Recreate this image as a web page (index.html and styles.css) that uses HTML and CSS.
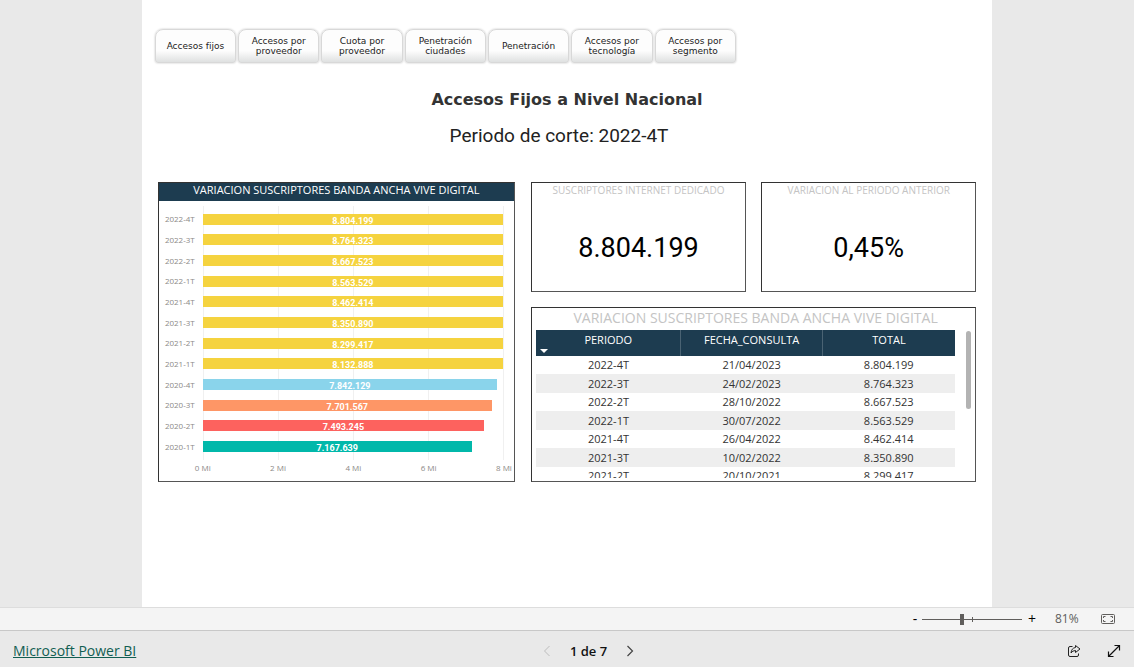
FILE: index.html
```html
<!DOCTYPE html>
<html lang="es">
<head>
<meta charset="utf-8">
<title>Accesos Fijos a Nivel Nacional</title>
<link rel="stylesheet" href="styles.css">
</head>
<body>
<main class="stage">
  <div class="sheet">
    <nav class="tabs">
      <button class="tab">Accesos fijos</button>
      <button class="tab">Accesos por proveedor</button>
      <button class="tab">Cuota por proveedor</button>
      <button class="tab">Penetración ciudades</button>
      <button class="tab">Penetración</button>
      <button class="tab">Accesos por tecnología</button>
      <button class="tab">Accesos por segmento</button>
    </nav>
    <h1 class="title">Accesos Fijos a Nivel Nacional</h1>
    <p class="period">Periodo de corte: 2022-4T</p>
    <div class="dashboard">
      <section class="panel chart">
        <h2 class="chart-title">VARIACION SUSCRIPTORES BANDA ANCHA VIVE DIGITAL</h2>
        <div class="chart-body">
          <div class="labels">
            <span>2022-4T</span><span>2022-3T</span><span>2022-2T</span><span>2022-1T</span>
            <span>2021-4T</span><span>2021-3T</span><span>2021-2T</span><span>2021-1T</span>
            <span>2020-4T</span><span>2020-3T</span><span>2020-2T</span><span>2020-1T</span>
          </div>
          <div class="plot">
            <div class="row"><div class="bar yellow" style="width:100%">8.804.199</div></div>
            <div class="row"><div class="bar yellow" style="width:100%">8.764.323</div></div>
            <div class="row"><div class="bar yellow" style="width:100%">8.667.523</div></div>
            <div class="row"><div class="bar yellow" style="width:100%">8.563.529</div></div>
            <div class="row"><div class="bar yellow" style="width:100%">8.462.414</div></div>
            <div class="row"><div class="bar yellow" style="width:100%">8.350.890</div></div>
            <div class="row"><div class="bar yellow" style="width:100%">8.299.417</div></div>
            <div class="row"><div class="bar yellow" style="width:100%">8.132.888</div></div>
            <div class="row"><div class="bar blue" style="width:98%">7.842.129</div></div>
            <div class="row"><div class="bar orange" style="width:96.3%">7.701.567</div></div>
            <div class="row"><div class="bar red" style="width:93.7%">7.493.245</div></div>
            <div class="row"><div class="bar teal" style="width:89.6%">7.167.639</div></div>
          </div>
          <div class="axis"><span>0 Mi</span><span>2 Mi</span><span>4 Mi</span><span>6 Mi</span><span>8 Mi</span></div>
        </div>
      </section>
      <div class="side">
        <section class="panel card">
          <h2 class="card-title">SUSCRIPTORES INTERNET DEDICADO</h2>
          <p class="card-value">8.804.199</p>
        </section>
        <section class="panel card">
          <h2 class="card-title">VARIACION AL PERIODO ANTERIOR</h2>
          <p class="card-value">0,45%</p>
        </section>
        <section class="panel listing">
          <h2 class="listing-title">VARIACION SUSCRIPTORES BANDA ANCHA VIVE DIGITAL</h2>
          <div class="viewport">
            <table class="data">
              <thead><tr><th class="sorted">PERIODO</th><th>FECHA_CONSULTA</th><th>TOTAL</th></tr></thead>
              <tbody>
                <tr><td>2022-4T</td><td>21/04/2023</td><td>8.804.199</td></tr>
                <tr><td>2022-3T</td><td>24/02/2023</td><td>8.764.323</td></tr>
                <tr><td>2022-2T</td><td>28/10/2022</td><td>8.667.523</td></tr>
                <tr><td>2022-1T</td><td>30/07/2022</td><td>8.563.529</td></tr>
                <tr><td>2021-4T</td><td>26/04/2022</td><td>8.462.414</td></tr>
                <tr><td>2021-3T</td><td>10/02/2022</td><td>8.350.890</td></tr>
                <tr><td>2021-2T</td><td>20/10/2021</td><td>8.299.417</td></tr>
              </tbody>
            </table>
            <div class="thumb"></div>
          </div>
        </section>
      </div>
    </div>
  </div>
</main>
<div class="zoombar">
  <button class="step minus" aria-label="Alejar">-</button>
  <div class="slider"><input type="range" min="10" max="190" value="81" aria-label="Zoom"></div>
  <button class="step plus" aria-label="Acercar">+</button>
  <span class="percent">81%</span>
  <button class="icon" aria-label="Ajustar a la página">
    <svg width="16" height="12" viewBox="0 0 16 12" fill="none" stroke="#605e5c"><rect x="1.5" y="1.5" width="13" height="9" rx="1"/><path d="M3.500 5V3.500H5.500M10.500 3.500H12.500V5M12.500 7V8.500H10.500M5.500 8.500H3.500V7"/></svg>
  </button>
</div>
<footer class="footer">
  <a class="brand" href="#">Microsoft Power BI</a>
  <div class="pager">
    <button class="icon" aria-label="Página anterior" disabled><svg width="10" height="12" viewBox="0 0 10 12" fill="none" stroke="#bdbdbd"><path d="M7.500 1L2.500 6L7.500 11"/></svg></button>
    <span class="page">1 de 7</span>
    <button class="icon" aria-label="Página siguiente"><svg width="10" height="12" viewBox="0 0 10 12" fill="none" stroke="#444" stroke-width="1.200"><path d="M2.500 1L7.500 6L2.500 11"/></svg></button>
  </div>
  <div class="actions">
    <button class="icon" aria-label="Compartir"><svg width="14" height="14" viewBox="0 0 14 14" fill="none" stroke="#222"><path d="M5.500 2.500H3Q1.500 2.500 1.500 4V11Q1.500 12.500 3 12.500H10Q11.500 12.500 11.500 11V9.500"/><path d="M8.500 1.500L13 5L8.500 8.500V6.500Q5.500 6.500 4 9Q4.500 4 8.500 3.500Z" stroke-linejoin="round"/></svg></button>
    <button class="icon" aria-label="Pantalla completa"><svg width="14" height="14" viewBox="0 0 14 14" fill="none" stroke="#111" stroke-width="1.200"><path d="M1.500 12.500L12.500 1.500M7.500 1.500H12.500V6.500M1.500 7.500V12.500H6.500"/></svg></button>
  </div>
</footer>
</body>
</html>
```
FILE: styles.css
```css
* { box-sizing: border-box; }
body {
  margin: 0;
  min-height: 100vh;
  display: flex;
  flex-direction: column;
  background: #e9e9e9;
  font-family: "Open Sans", "Noto Sans", sans-serif;
}
h1, h2, p { margin: 0; font-weight: 400; }
button { font: inherit; padding: 0; border: 0; background: none; cursor: pointer; }
svg { display: block; }

.stage { flex: 1; display: flex; justify-content: center; }
.sheet { width: 75%; padding: 29px 16px 16px; background: #fff; }

.tabs {
  display: grid;
  grid-template-columns: repeat(7, 1fr);
  gap: 2px;
  width: 71%;
  margin-left: -3px;
}
.tab {
  height: 34px;
  padding: 0 8px;
  border: 1px solid #d8d8d8;
  border-radius: 8px 8px 3px 3px;
  background: linear-gradient(#fdfdfd 65%, #dfe1e1);
  box-shadow: 0 0 2px #bbb;
  font-family: "DejaVu Sans", sans-serif;
  font-size: 9px;
  line-height: 10px;
  color: #222;
}

.title {
  margin-top: 27px;
  text-align: center;
  font: 700 16px/20px "DejaVu Sans", sans-serif;
  color: #333;
}
.period {
  margin-top: 14px;
  padding-right: 16px;
  text-align: center;
  font: 400 19px/24px Roboto, sans-serif;
  color: #222;
}

.dashboard {
  display: grid;
  grid-template-columns: 357fr 445fr;
  gap: 16px;
  margin-top: 34px;
}
.panel {
  border: 1px solid #333;
  border-right-color: #555;
  border-bottom-color: #555;
  background: #fff;
}

.chart-title {
  height: 18px;
  background: #1d3c50;
  color: #fff;
  text-align: center;
  font-size: 11px;
  line-height: 14px;
}
.chart-body {
  display: grid;
  grid-template-columns: 44px 1fr;
  padding: 5px 10px 5px 0;
  font-size: 8px;
  color: #8b8987;
}
.labels, .plot { display: grid; grid-template-rows: repeat(12, 1fr); height: 254px; padding: 3px 0; }
.labels { padding-right: 8px; text-align: right; align-items: center; line-height: 10px; }
.plot {
  background: linear-gradient(90deg, #f0f0f0 1px, transparent 1px) 0 0 / 25% 100%;
  border-right: 1px solid #f0f0f0;
}
.row { display: flex; align-items: center; }
.bar {
  height: 11px;
  overflow: hidden;
  text-align: center;
  font: 700 9px/14px Roboto, sans-serif;
  color: #fff;
}
.yellow { background: #f5d33f; }
.blue { background: #8ad4eb; }
.orange { background: #fe9666; }
.red { background: #fd625e; }
.teal { background: #01b8aa; }
.axis { grid-column: 2; display: flex; justify-content: space-between; line-height: 16px; }
.axis span { display: flex; justify-content: center; width: 0; white-space: nowrap; }

.side {
  display: grid;
  grid-template-columns: 1fr 1fr;
  grid-template-rows: 110px auto;
  gap: 15px;
}
.card { text-align: center; }
.card-title { font-size: 10px; line-height: 14px; color: #c4c4c4; }
.card-value { margin-top: 34px; font: 400 27px/34px Roboto, sans-serif; color: #000; }

.listing { grid-column: 1 / 3; padding-left: 4px; }
.listing-title { text-align: center; font-size: 14px; line-height: 20px; height: 22px; color: #c4c4c4; }
.viewport { display: flex; gap: 11px; height: 148px; overflow: hidden; }
.data { flex: 1; border-collapse: collapse; table-layout: fixed; align-self: flex-start; font-size: 11px; color: #333; text-align: center; }
.data th, .data td { padding: 0; }
.data th {
  position: relative;
  height: 26px;
  background: #1d3c50;
  border-right: 1px solid #4a6373;
  color: #fff;
  font-weight: 400;
  line-height: 14px;
  vertical-align: top;
  padding-top: 3px;
}
.data th:first-child { width: 145px; }
.data th:last-child { width: 133px; border-right: 0; }
.sorted::after {
  content: "";
  position: absolute;
  left: 4px;
  bottom: 3px;
  border: 4px solid transparent;
  border-top-color: #fff;
  border-bottom: 0;
}
.data td { height: 18px; line-height: 18px; }
.data tr:nth-child(even) td { height: 19px; background: #eee; }
.thumb { width: 5px; height: 78px; margin: 1px 4px 0 0; border-radius: 3px; background: #b3b3b3; }

.zoombar {
  display: flex;
  align-items: center;
  justify-content: flex-end;
  height: 24px;
  padding-right: 18px;
  border-top: 1px solid #ddd;
  border-bottom: 1px solid #c8c8c8;
  background: #f4f4f4;
  color: #605e5c;
  font-size: 12px;
  line-height: 22px;
}
.step { width: 14px; font-size: 14px; line-height: 20px; }
.slider { display: flex; width: 100px; height: 12px; background: linear-gradient(#605e5c, #605e5c) 50px 4px / 1px 5px no-repeat, linear-gradient(#605e5c, #605e5c) 0 6px / 100% 1px no-repeat; }
.slider input { appearance: none; width: 100%; height: 12px; margin: 0; background: none; }
.slider input::-webkit-slider-thumb { appearance: none; width: 4px; height: 11px; background: #605e5c; }
.plus { margin: 0 3px; }
.percent { width: 58px; padding-left: 13px; }

.footer {
  display: grid;
  grid-template-columns: 1fr auto 1fr;
  align-items: center;
  height: 36px;
  padding: 3px 13px 0;
}
.brand { justify-self: start; font-size: 14px; line-height: 20px; color: #115e52; }
.pager { display: flex; align-items: center; gap: 18px; padding-left: 43px; }
.page { font-size: 13px; font-weight: 600; line-height: 20px; color: #111; }
.actions { display: flex; justify-content: flex-end; gap: 26px; }
```
